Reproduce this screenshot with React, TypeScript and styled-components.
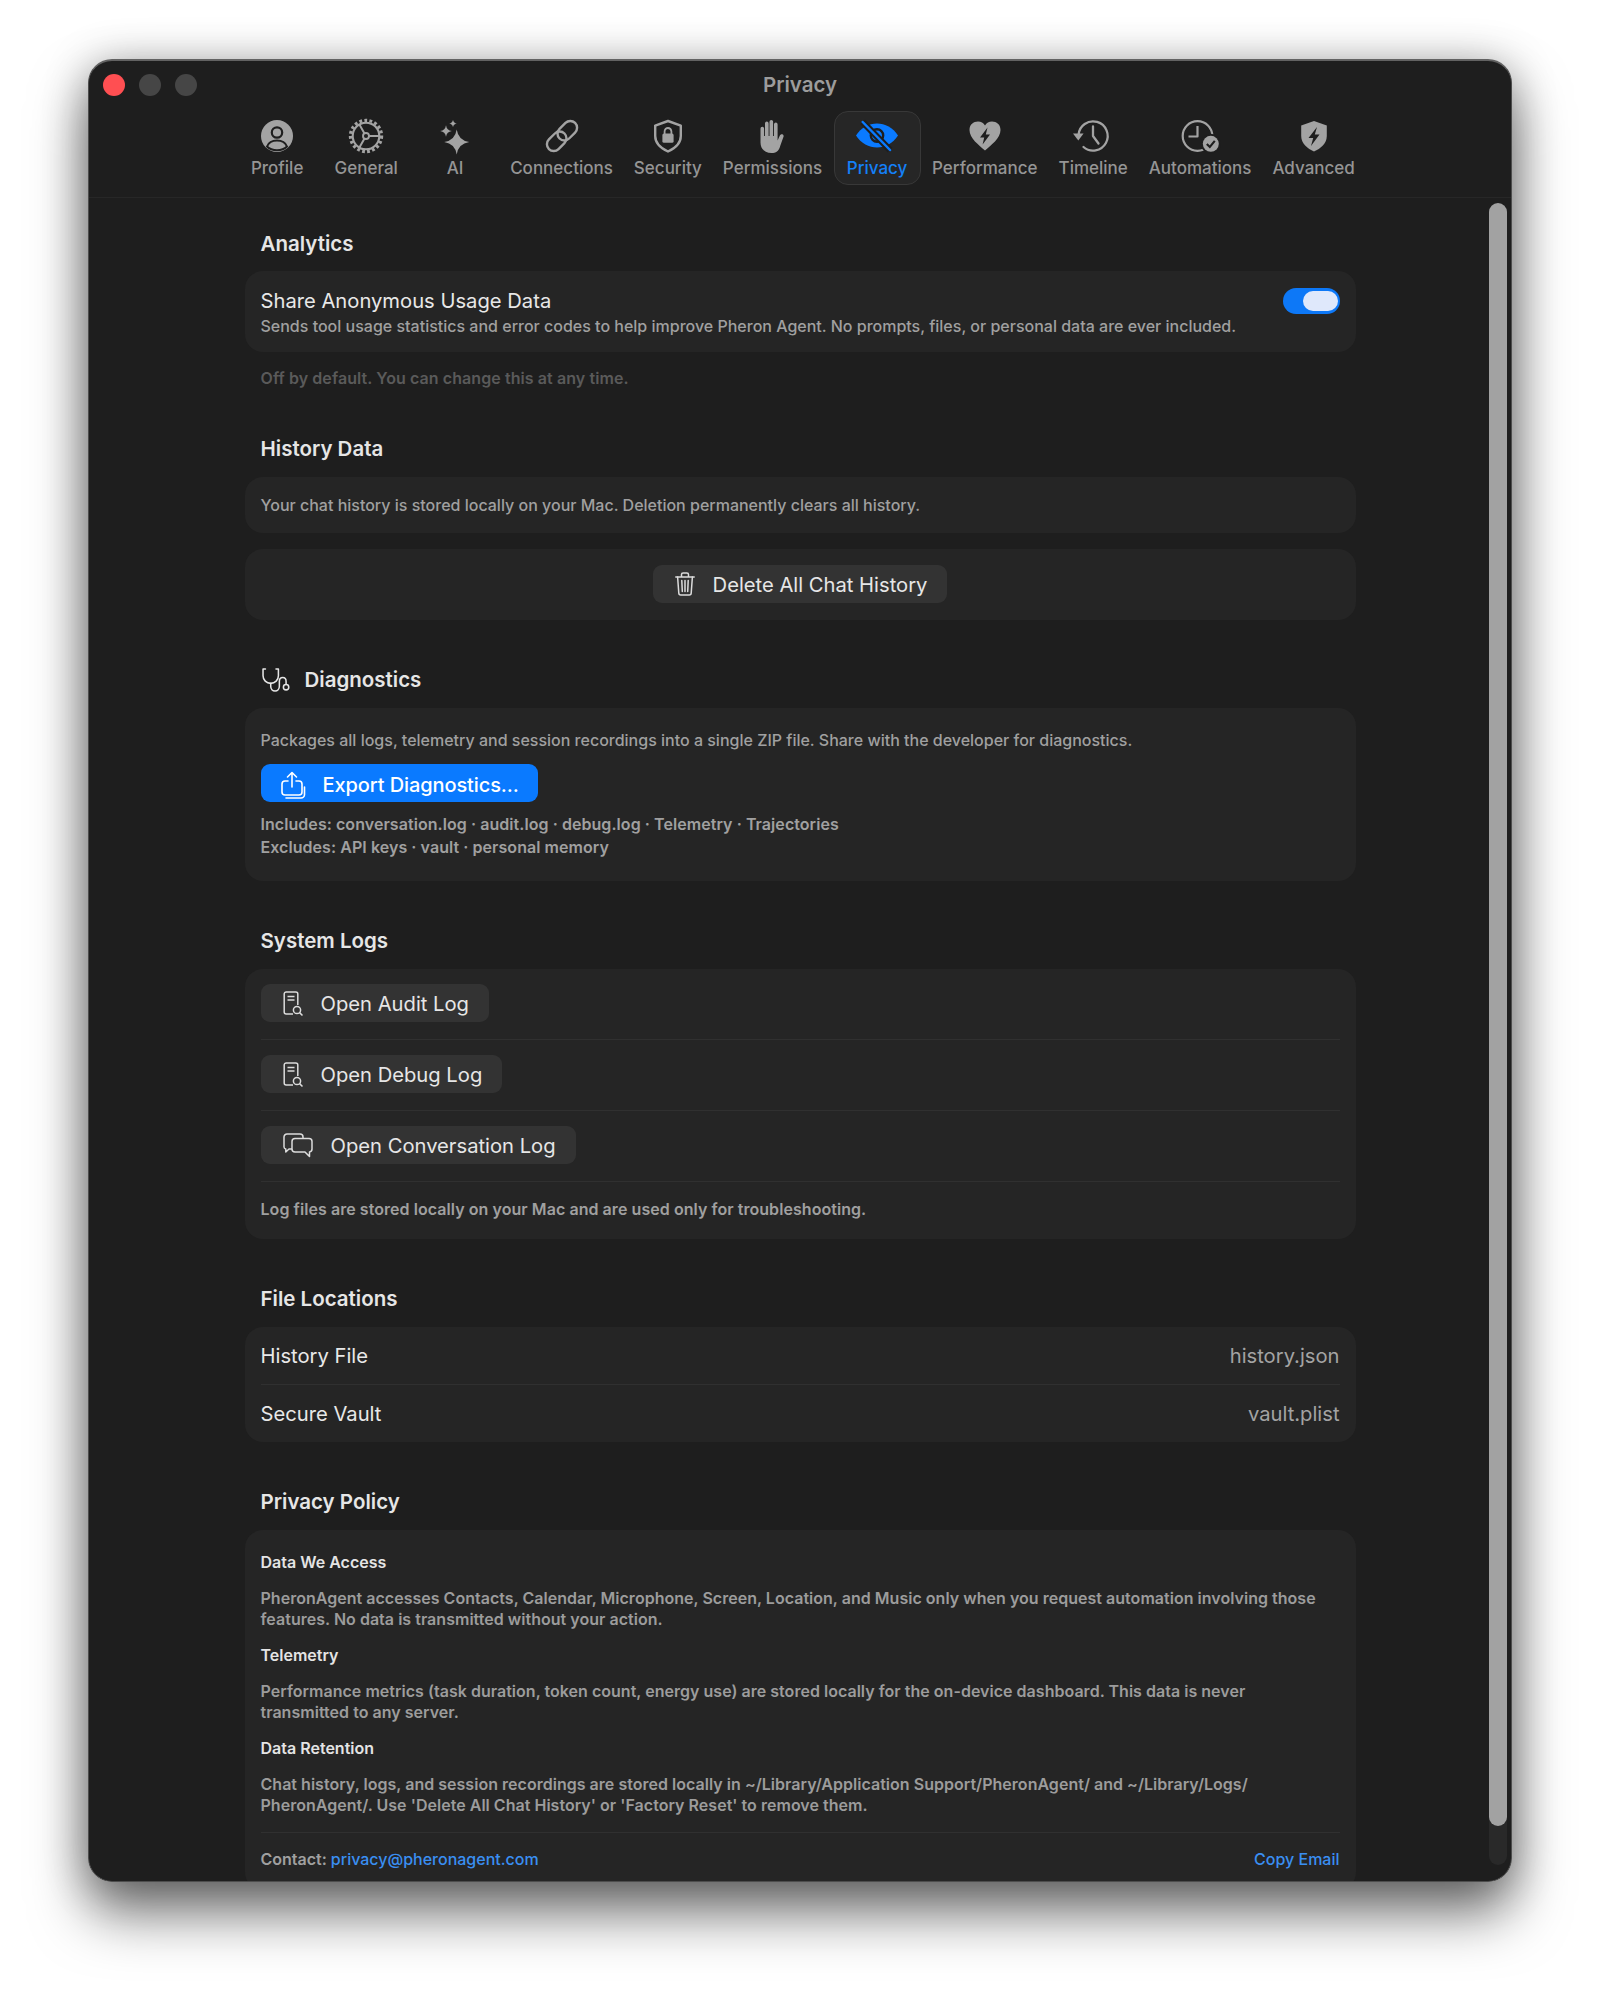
import React from "react";
import styled, { createGlobalStyle } from "styled-components";

const BG = "#1e1e1e";
const GRAY = "#a3a3a3";
const BLUE = "#0a7aff";

const Global = createGlobalStyle`
  html, body { margin: 0; padding: 0; background: #fff; }
  body { font-family: Inter, "Liberation Sans", sans-serif; -webkit-font-smoothing: antialiased; }
  * { box-sizing: border-box; }
`;

const Page = styled.div`
  width: 1600px;
  height: 1999px;
  padding: 59px 88px 0;
  overflow: hidden;
`;
const Window = styled.div`
  position: relative;
  display: flex;
  flex-direction: column;
  height: 1823px;
  background: ${BG};
  border: 1px solid #4d4d4d;
  border-top: 2px solid #626262;
  border-radius: 24px;
  overflow: hidden;
`;
const Shadow = styled.div`
  border-radius: 24px;
  box-shadow: 0 32px 56px rgba(0, 0, 0, 0.52), 0 4px 44px rgba(0, 0, 0, 0.3);
`;
const Header = styled.header`
  flex: none;
  height: 137px;
  border-bottom: 1px solid #272727;
`;
const TitleBar = styled.div`
  display: grid;
  grid-template-columns: 1fr auto 1fr;
  align-items: center;
  height: 48px;
  margin-bottom: 2px;
  padding: 0 14px;
`;
const Lights = styled.div`
  display: flex;
  gap: 14px;
`;
const Light = styled.span<{ $c: string }>`
  width: 22px;
  height: 22px;
  border-radius: 50%;
  background: ${(p) => p.$c};
`;
const Title = styled.div`
  padding-bottom: 2px;
  font-size: 20.5px;
  font-weight: 600;
  color: #9c9c9c;
`;
const Tabs = styled.nav`
  display: flex;
  justify-content: center;
  gap: 2px;
  height: 74px;
  padding-right: 2px;
`;
const Tab = styled.div<{ $active?: boolean }>`
  min-width: 87px;
  padding: 8px 8.5px 0;
  display: flex;
  flex-direction: column;
  align-items: center;
  gap: 5px;
  border-radius: 14px;
  border: 1px solid ${(p) => (p.$active ? "#383838" : "transparent")};
  background: ${(p) => (p.$active ? "#262626" : "transparent")};
  color: ${(p) => (p.$active ? "#1480f8" : "#959595")};
`;
const TabIcon = styled.svg`
  width: 32px;
  height: 32px;
  overflow: visible;
  flex: none;
`;
const TabLabel = styled.span`
  font-size: 17px;
  font-weight: 500;
  line-height: 22px;
  white-space: nowrap;
`;
const Scroller = styled.main`
  position: relative;
  flex: 1;
  min-height: 0;
  overflow: hidden;
`;
const Content = styled.div`
  width: 1111px;
  margin: 0 auto;
  padding-top: 34px;
`;
const Section = styled.section`
  & + & {
    margin-top: 48px;
  }
`;
const Heading = styled.h2<{ $mb?: number }>`
  display: flex;
  align-items: center;
  gap: 14px;
  height: 24px;
  margin: 0 0 ${(p) => p.$mb ?? 16}px;
  padding: 0 16px;
  font-size: 20.5px;
  font-weight: 600;
  line-height: 24px;
  color: #e6e6e6;
`;
const Card = styled.div<{ $pad?: string; $center?: boolean }>`
  background: #252525;
  border-radius: 18px;
  padding: ${(p) => p.$pad ?? "0 16px"};
  ${(p) => (p.$center ? "display:flex;justify-content:center;" : "")}
  & + & {
    margin-top: 16px;
  }
`;
const ToggleRow = styled.div`
  display: flex;
  justify-content: space-between;
  align-items: flex-start;
`;
const RowTitle = styled.div`
  font-size: 20.2px;
  line-height: 26px;
  font-weight: 400;
  color: #e8e8e8;
`;
const Small = styled.div<{ $lh?: number; $w?: number }>`
  font-size: 16px;
  font-weight: ${(p) => p.$w ?? 500};
  letter-spacing: ${(p) => (p.$w ? 0.06 : 0)}px;
  line-height: ${(p) => p.$lh ?? 24}px;
  color: #a0a0a0;
`;
const Toggle = styled.div`
  width: 57px;
  height: 26px;
  padding: 3px 2px;
  border-radius: 13px;
  background: #0d78f7;
  display: flex;
  justify-content: flex-end;
`;
const Knob = styled.span`
  width: 35px;
  height: 20px;
  border-radius: 10px;
  background: #dfe8fb;
`;
const Note = styled.div`
  margin-top: 15px;
  padding: 0 16px;
  font-size: 16px;
  font-weight: 600;
  letter-spacing: 0.08px;
  line-height: 22px;
  color: #5a5a5a;
`;
const Button = styled.button<{ $primary?: boolean }>`
  display: inline-flex;
  align-items: center;
  gap: 18px;
  height: 38px;
  padding: ${(p) => (p.$primary ? "4px 19px 0 20px" : "0 20px 0 22px")};
  border: 0;
  border-radius: 9px;
  font-family: inherit;
  font-size: ${(p) => (p.$primary ? 20 : 20.2)}px;
  font-weight: ${(p) => (p.$primary ? 500 : 400)};
  letter-spacing: ${(p) => (p.$primary ? -0.1 : 0)}px;
  color: ${(p) => (p.$primary ? "#fff" : "#e6e6e6")};
  background: ${(p) => (p.$primary ? BLUE : "#333333")};
`;
const ExportButton = styled(Button)`
  margin: 13px 0 11px;
`;
const BtnIcon = styled.svg<{ $w: number; $h: number }>`
  width: ${(p) => p.$w}px;
  height: ${(p) => p.$h}px;
  flex: none;
  overflow: visible;
`;
const LogRow = styled.div`
  padding: 15px 0 17px;
  border-bottom: 1px solid #303030;
`;
const LogNote = styled(Small)`
  margin-top: 16px;
`;
const FileRow = styled.div`
  display: flex;
  justify-content: space-between;
  align-items: center;
  height: 58px;
  font-size: 20.2px;
  color: #e8e8e8;
  &:first-child {
    border-bottom: 1px solid #303030;
  }
  &:last-child {
    height: 57px;
  }
`;
const FileValue = styled.span`
  color: #a3a3a3;
`;
const PolicyHead = styled.div`
  font-size: 16px;
  line-height: 22px;
  font-weight: 600;
  color: #e4e4e4;
`;
const PolicyText = styled.p`
  margin: 14.5px 0;
  font-size: 16px;
  font-weight: 600;
  letter-spacing: 0.025px;
  line-height: 21px;
  color: #9c9c9c;
`;
const ContactRow = styled.div`
  display: flex;
  justify-content: space-between;
  margin-top: 16px;
  padding-top: 15px;
  border-top: 1px solid #303030;
  font-size: 16px;
  font-weight: 600;
  line-height: 22px;
  color: #a0a0a0;
`;
const Link = styled.span`
  font-weight: 500;
  color: #3a8ff2;
`;
const Track = styled.div`
  position: absolute;
  top: 5px;
  right: 4px;
  bottom: 16px;
  width: 18px;
  border-radius: 9px;
  background: #292929;
`;
const Thumb = styled.div`
  height: 1623px;
  border-radius: 9px;
  background: #a2a2a2;
`;

const star = (x: number, y: number, r: number) => {
  const k = r * 0.13;
  return `M${x} ${y - r}Q${x + k} ${y - k} ${x + r} ${y}Q${x + k} ${y + k} ${x} ${y + r}Q${x - k} ${y + k} ${x - r} ${y}Q${x - k} ${y - k} ${x} ${y - r}Z`;
};

const SHIELD = "M16 1L28.8 5.6V16C28.8 23.5 22.5 28.6 16 31.5C9.5 28.6 3.2 23.5 3.2 16V5.6Z";
const BOLT = "M19 7L10.5 18H15.2L13 26L21.5 14.6H16.8Z";

const icons: Record<string, React.ReactNode> = {
  Profile: (
    <>
      <circle cx="16" cy="16" r="16" fill={GRAY} />
      <circle cx="16" cy="12.5" r="5.2" fill={GRAY} stroke={BG} strokeWidth="2.2" />
      <path d="M6 26.5C8 21.5 12 20.5 16 20.5S24 21.5 26 26.5C23.5 29 20 30.2 16 30.2S8.5 29 6 26.5Z" fill="none" stroke={BG} strokeWidth="2" />
    </>
  ),
  General: (
    <g fill="none" stroke={GRAY}>
      <circle cx="16" cy="16" r="15.6" strokeWidth="3.2" strokeDasharray="2.8 2.3" />
      <circle cx="16" cy="16" r="13.3" strokeWidth="2.1" />
      <circle cx="16" cy="16" r="3" strokeWidth="1.9" />
      <path d="M19 16H29.3M14.5 13.4L9.4 4.5M14.5 18.6L9.4 27.5" strokeWidth="2" />
    </g>
  ),
  AI: (
    <g fill={GRAY}>
      <path d={star(17.7, 22, 12.5)} />
      <path d={star(7, 11, 5.8)} />
      <path d={star(14, 3.5, 3.8)} />
    </g>
  ),
  Connections: (
    <g fill="none" stroke={GRAY} strokeWidth="2.4" transform="rotate(-45 16 16)">
      <rect x="-2.5" y="9.2" width="22" height="13.6" rx="6.8" />
      <rect x="12.5" y="9.2" width="22" height="13.6" rx="6.8" />
    </g>
  ),
  Security: (
    <>
      <path d={SHIELD} fill="none" stroke={GRAY} strokeWidth="2.4" strokeLinejoin="round" />
      <rect x="10.4" y="13.4" width="11.2" height="9.4" rx="1.6" fill={GRAY} />
      <path d="M12.6 14V11.4A3.4 3.4 0 0 1 19.4 11.4V14" fill="none" stroke={GRAY} strokeWidth="1.8" />
    </>
  ),
  Permissions: (
    <path
      fill={GRAY}
      d="M4.5 8.6a1.8 1.8 0 0 1 3.6 0V16h.9V3.4a1.8 1.8 0 0 1 3.6 0V16h.9V1.8a1.8 1.8 0 0 1 3.6 0V16h.9V4.4a1.8 1.8 0 0 1 3.6 0V20.5l2-4.6c.6-1.4 1.8-2 2.9-1.6 1.1.4 1.4 1.5.9 2.8l-3.2 8.8C23 31 19.8 33 15.5 33 9 33 4.5 29 4.5 22.5Z"
    />
  ),
  Privacy: (
    <g transform="translate(-5 0)">
      <path fill={BLUE} d="M0 15.5C5 7.5 13 3.5 21 3.5S37 7.5 42 15.5C37 23.5 29 27.5 21 27.5S5 23.5 0 15.5Z" />
      <circle cx="21" cy="15.5" r="6.2" fill="none" stroke={BG} strokeWidth="2.4" />
      <path d="M6.7 2L34 30" stroke={BG} strokeWidth="6.5" />
      <path d="M6.7 2L34 30" stroke={BLUE} strokeWidth="2.5" strokeLinecap="round" />
    </g>
  ),
  Performance: (
    <>
      <path
        fill={GRAY}
        d="M16 30.5C10 25 .5 18.5 .5 10C.5 4.6 4.5 1.6 9 1.6C12 1.6 14.5 3 16 5.6C17.5 3 20 1.6 23 1.6C27.5 1.6 31.5 4.6 31.5 10C31.5 18.5 22 25 16 30.5Z"
      />
      <path fill={BG} d="M18.5 7.5L11 17.5H15.2L13.6 24.5L21 14.5H16.8Z" />
    </>
  ),
  Timeline: (
    <g fill="none" stroke={GRAY} strokeWidth="2.3">
      <path d="M1.5 15A14.6 14.6 0 1 1 6.5 27" strokeLinecap="round" />
      <path d="M-4 13.4H6.6L1.3 20.6Z" fill={GRAY} stroke="none" />
      <path d="M16 6.5V16L21.5 23.5" strokeLinecap="round" strokeLinejoin="round" />
    </g>
  ),
  Automations: (
    <>
      <g fill="none" stroke={GRAY} strokeWidth="2.2">
        <circle cx="13.5" cy="16" r="14.8" />
        <path d="M13.5 6V16.5H4.5" strokeLinejoin="round" />
      </g>
      <circle cx="26.8" cy="23.8" r="10" fill={BG} />
      <circle cx="26.8" cy="23.8" r="8" fill={GRAY} />
      <path d="M22.8 24L25.8 27L30.8 20.8" fill="none" stroke={BG} strokeWidth="2.1" />
    </>
  ),
  Advanced: (
    <>
      <path d={SHIELD} fill={GRAY} />
      <path d={BOLT} fill={BG} />
    </>
  ),
};

const TABS = ["Profile", "General", "AI", "Connections", "Security", "Permissions", "Privacy", "Performance", "Timeline", "Automations", "Advanced"];

const DocIcon = () => (
  <BtnIcon $w={20} $h={25} viewBox="0 0 20 25" fill="none" stroke="#dcdcdc" strokeWidth="1.5">
    <path d="M10 23H3.2A2 2 0 0 1 1.2 21V3A2 2 0 0 1 3.2 1H12.8A2 2 0 0 1 14.8 3V14" />
    <path d="M4.5 5.5H11.5M4.5 9H11.5" />
    <circle cx="14" cy="19" r="3.6" />
    <path d="M16.6 21.6L19.5 24.5" />
  </BtnIcon>
);

const policy = [
  {
    h: "Data We Access",
    t: (
      <>
        PheronAgent accesses Contacts, Calendar, Microphone, Screen, Location, and Music only when you request automation involving those
        <br />
        features. No data is transmitted without your action.
      </>
    ),
  },
  {
    h: "Telemetry",
    t: (
      <>
        Performance metrics (task duration, token count, energy use) are stored locally for the on-device dashboard. This data is never
        <br />
        transmitted to any server.
      </>
    ),
  },
  {
    h: "Data Retention",
    t: (
      <>
        Chat history, logs, and session recordings are stored locally in ~/Library/Application Support/PheronAgent/ and ~/Library/Logs/
        <br />
        PheronAgent/. Use 'Delete All Chat History' or 'Factory Reset' to remove them.
      </>
    ),
  },
];

export default function App() {
  return (
    <Page>
      <Global />
      <Shadow>
        <Window>
          <Header>
            <TitleBar>
              <Lights>
                <Light $c="#ff4f52" />
                <Light $c="#464646" />
                <Light $c="#464646" />
              </Lights>
              <Title>Privacy</Title>
              <span />
            </TitleBar>
            <Tabs>
              {TABS.map((t) => (
                <Tab key={t} $active={t === "Privacy"}>
                  <TabIcon viewBox="0 0 32 32">{icons[t]}</TabIcon>
                  <TabLabel>{t}</TabLabel>
                </Tab>
              ))}
            </Tabs>
          </Header>
          <Scroller>
            <Content>
              <Section>
                <Heading $mb={15}>Analytics</Heading>
                <Card $pad="17px 16px 14px">
                  <ToggleRow>
                    <RowTitle>Share Anonymous Usage Data</RowTitle>
                    <Toggle>
                      <Knob />
                    </Toggle>
                  </ToggleRow>
                  <Small>Sends tool usage statistics and error codes to help improve Pheron Agent. No prompts, files, or personal data are ever included.</Small>
                </Card>
                <Note>Off by default. You can change this at any time.</Note>
              </Section>

              <Section>
                <Heading>History Data</Heading>
                <Card $pad="16px">
                  <Small>Your chat history is stored locally on your Mac. Deletion permanently clears all history.</Small>
                </Card>
                <Card $pad="16px 16px 17px" $center>
                  <Button>
                    <BtnIcon $w={20} $h={24} viewBox="0 0 20 24" fill="none" stroke="#dcdcdc" strokeWidth="1.5" strokeLinecap="round">
                      <path d="M.8 5H19.2M6.5 5V2.6A1.6 1.6 0 0 1 8.1 1H11.9A1.6 1.6 0 0 1 13.5 2.6V5" />
                      <path d="M2.6 5L3.8 21A2 2 0 0 0 5.8 23H14.2A2 2 0 0 0 16.2 21L17.4 5" />
                      <path d="M6.8 8.5L7.3 19.5M10 8.5V19.5M13.2 8.5L12.7 19.5" />
                    </BtnIcon>
                    <span>Delete All Chat History</span>
                  </Button>
                </Card>
              </Section>

              <Section>
                <Heading>
                  <BtnIcon $w={30} $h={24} viewBox="0 0 30 25" fill="none" stroke="#e6e6e6" strokeWidth="1.6" strokeLinecap="round" strokeLinejoin="round">
                    <path d="M4 1H1.5V8C1.5 12.5 5 16 9.5 16C14 16 17.5 12.5 17.5 8V1H15" />
                    <path d="M9.5 16V19C9.5 22 11.5 24 14 24C16.5 24 18.5 22 18.5 19V14C18.5 11.5 20 10 22 10C24 10 25.5 11.5 25.5 14V17" />
                    <circle cx="25.5" cy="20" r="2.8" />
                  </BtnIcon>
                  Diagnostics
                </Heading>
                <Card $pad="21px 16px 22px">
                  <Small $lh={22}>Packages all logs, telemetry and session recordings into a single ZIP file. Share with the developer for diagnostics.</Small>
                  <ExportButton $primary>
                    <BtnIcon $w={24} $h={28} viewBox="0 0 24 28" fill="none" stroke="#fff" strokeWidth="1.6" strokeLinecap="round" strokeLinejoin="round">
                      <path d="M11 16V2M6.5 6L11 1.5L15.5 6" />
                      <path d="M7 10H4A3 3 0 0 0 1 13V21A3 3 0 0 0 4 24H18A3 3 0 0 0 21 21V13A3 3 0 0 0 18 10H15" />
                      <path d="M5 27H20A3.5 3.5 0 0 0 23.5 23.5V16" />
                    </BtnIcon>
                    <span>Export Diagnostics...</span>
                  </ExportButton>
                  <Small $lh={23} $w={600}>
                    Includes: conversation.log · audit.log · debug.log · Telemetry · Trajectories
                    <br />
                    Excludes: API keys · vault · personal memory
                  </Small>
                </Card>
              </Section>

              <Section>
                <Heading>System Logs</Heading>
                <Card $pad="0 16px 19px">
                  <LogRow>
                    <Button>
                      <DocIcon />
                      <span>Open Audit Log</span>
                    </Button>
                  </LogRow>
                  <LogRow>
                    <Button>
                      <DocIcon />
                      <span>Open Debug Log</span>
                    </Button>
                  </LogRow>
                  <LogRow>
                    <Button>
                      <BtnIcon $w={30} $h={25} viewBox="0 0 30 25" fill="none" stroke="#dcdcdc" strokeWidth="1.5" strokeLinejoin="round">
                        <path d="M9 16H6L2.8 19V16A2.2 2.2 0 0 1 1 14V4A3 3 0 0 1 4 1H17A3 3 0 0 1 20 4V5.5" />
                        <path d="M12 5.5H26A3 3 0 0 1 29 8.5V16A3 3 0 0 1 26.5 19V23.5L22 19H12A3 3 0 0 1 9 16V8.5A3 3 0 0 1 12 5.5Z" />
                      </BtnIcon>
                      <span>Open Conversation Log</span>
                    </Button>
                  </LogRow>
                  <LogNote $lh={22} $w={600}>
                    Log files are stored locally on your Mac and are used only for troubleshooting.
                  </LogNote>
                </Card>
              </Section>

              <Section>
                <Heading>File Locations</Heading>
                <Card>
                  <FileRow>
                    <span>History File</span>
                    <FileValue>history.json</FileValue>
                  </FileRow>
                  <FileRow>
                    <span>Secure Vault</span>
                    <FileValue>vault.plist</FileValue>
                  </FileRow>
                </Card>
              </Section>

              <Section>
                <Heading>Privacy Policy</Heading>
                <Card $pad="21px 16px 20px">
                  {policy.map((p) => (
                    <div key={p.h}>
                      <PolicyHead>{p.h}</PolicyHead>
                      <PolicyText>{p.t}</PolicyText>
                    </div>
                  ))}
                  <ContactRow>
                    <span>
                      Contact: <Link>privacy@pheronagent.com</Link>
                    </span>
                    <Link>Copy Email</Link>
                  </ContactRow>
                </Card>
              </Section>
            </Content>
            <Track>
              <Thumb />
            </Track>
          </Scroller>
        </Window>
      </Shadow>
    </Page>
  );
}
